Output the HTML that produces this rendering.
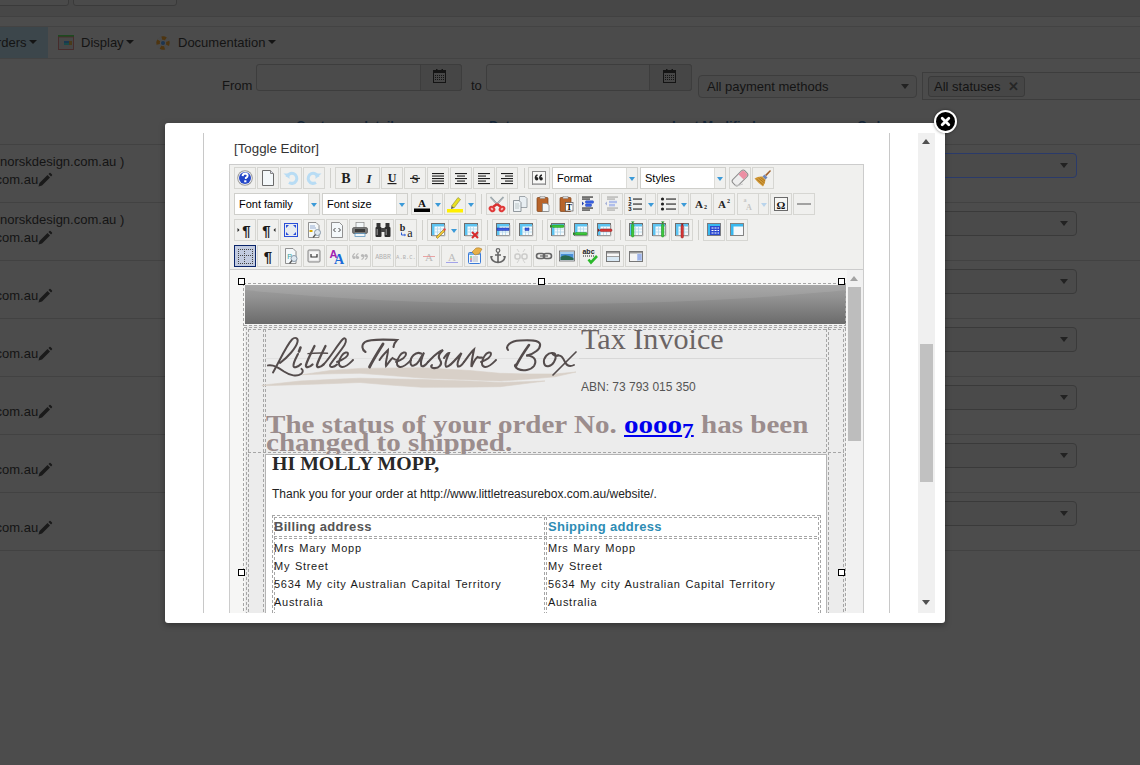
<!DOCTYPE html><html><head><meta charset="utf-8"><style>
*{margin:0;padding:0;box-sizing:border-box}
html,body{width:1140px;height:765px;overflow:hidden;background:#4c4c4c;font-family:"Liberation Sans",sans-serif;position:relative}
.ab{position:absolute}
.btn{position:absolute;width:22px;height:22px;border:1px solid #d6d6d2;background:#f0f0ee}
.btn svg{position:absolute;left:0;top:0;width:20px;height:20px}
.sep{position:absolute;width:1px;height:20px;background:#d0d0cc}
.sel{position:absolute;height:22px;background:#fff;border:1px solid #cfcfcb;font-size:11px;color:#000;padding-left:4px;line-height:20px;font-family:"Liberation Sans",sans-serif}
.sel .arr{position:absolute;right:0;top:0;width:11px;height:20px;background:#f0f0ee;border-left:1px solid #dcdcd8}
.sel .arr:after{content:"";position:absolute;left:2px;top:9px;border-left:3.5px solid transparent;border-right:3.5px solid transparent;border-top:4px solid #3b9ad8}
.dash{position:absolute;border:0 dashed #b4b4b4}
</style></head><body>
<div class="ab" style="left:0;top:0;width:1140px;height:17px;background:#474747"></div>
<div class="ab" style="left:-10px;top:-6px;width:79px;height:12px;border:1px solid #3a3a3a;border-radius:3px;background:#4a4a4a"></div>
<div class="ab" style="left:73px;top:-6px;width:104px;height:12px;border:1px solid #3a3a3a;border-radius:3px;background:#4a4a4a"></div>
<div class="ab" style="left:0;top:16px;width:1140px;height:1px;background:#414141"></div>
<div class="ab" style="left:0;top:26px;width:1140px;height:1px;background:#434343"></div>
<div class="ab" style="left:0;top:27px;width:1140px;height:31px;background:#4b4b4b"></div>
<div class="ab" style="left:0;top:58px;width:1140px;height:1px;background:#434343"></div>
<div class="ab" style="left:0;top:27px;width:48px;height:31px;background:#3c464b"></div>
<div class="ab" style="left:-3px;top:34.7px;font-size:13px;color:#141414">rders <span style="display:inline-block;width:0;height:0;border-top:4px solid #141414;border-left:4px solid transparent;border-right:4px solid transparent;vertical-align:middle;margin-left:-1px;position:relative;top:-1px"></span></div>
<svg class="ab" style="left:58px;top:35px" width="16" height="15"><rect x="0.5" y="1.5" width="15" height="13" fill="#474747" stroke="#3a3a3a"/><rect x="0" y="0" width="16" height="2" fill="#1e4a20"/><rect x="0.5" y="2" width="15" height="12.5" fill="none" stroke="#4a2a2a" stroke-width=".8"/><rect x="6" y="6" width="5" height="2" fill="#1a3850"/><rect x="6" y="8" width="5" height="2" fill="#1a4a4a"/><rect x="11" y="6" width="3" height="4" fill="#4a3a1a"/></svg>
<div class="ab" style="left:81px;top:34.7px;font-size:13px;color:#141414">Display <span style="display:inline-block;width:0;height:0;border-top:4px solid #141414;border-left:4px solid transparent;border-right:4px solid transparent;vertical-align:middle;margin-left:-1px;position:relative;top:-1px"></span></div>
<svg class="ab" style="left:155px;top:35px" width="16" height="16"><circle cx="8" cy="8" r="5" fill="none" stroke="#4a4a4a" stroke-width="3.5"/><circle cx="8" cy="8" r="5" fill="none" stroke="#4e3510" stroke-width="3.5" stroke-dasharray="4 3.85" transform="rotate(-20 8 8)"/><circle cx="8" cy="8" r="2" fill="#1d3550"/></svg>
<div class="ab" style="left:178px;top:34.7px;font-size:13px;color:#141414">Documentation <span style="display:inline-block;width:0;height:0;border-top:4px solid #141414;border-left:4px solid transparent;border-right:4px solid transparent;vertical-align:middle;margin-left:-1px;position:relative;top:-1px"></span></div>
<div class="ab" style="left:222px;top:78.2px;font-size:13px;color:#141414">From</div>
<div class="ab" style="left:256px;top:64px;width:206px;height:27px;border:1px solid #3d3d3d;border-radius:3px;background:#4b4b4b"></div>
<div class="ab" style="left:420px;top:64px;width:42px;height:27px;border:1px solid #3d3d3d;border-radius:0 3px 3px 0;background:#464646"></div>
<svg class="ab" style="left:433px;top:69px" width="13" height="14"><rect x="0.5" y="1.5" width="12" height="12" fill="none" stroke="#141414"/><rect x="0" y="1" width="13" height="3" fill="#141414"/><rect x="3" y="0" width="1.5" height="2" fill="#141414"/><rect x="8.5" y="0" width="1.5" height="2" fill="#141414"/><path d="M2 6.5 H11 M2 8.5 H11 M2 10.5 H11" stroke="#141414" stroke-width="1" stroke-dasharray="1 1"/></svg>
<div class="ab" style="left:471px;top:78.2px;font-size:13px;color:#141414">to</div>
<div class="ab" style="left:486px;top:64px;width:206px;height:27px;border:1px solid #3d3d3d;border-radius:3px;background:#4b4b4b"></div>
<div class="ab" style="left:649px;top:64px;width:43px;height:27px;border:1px solid #3d3d3d;border-radius:0 3px 3px 0;background:#464646"></div>
<svg class="ab" style="left:663px;top:69px" width="13" height="14"><rect x="0.5" y="1.5" width="12" height="12" fill="none" stroke="#141414"/><rect x="0" y="1" width="13" height="3" fill="#141414"/><rect x="3" y="0" width="1.5" height="2" fill="#141414"/><rect x="8.5" y="0" width="1.5" height="2" fill="#141414"/><path d="M2 6.5 H11 M2 8.5 H11 M2 10.5 H11" stroke="#141414" stroke-width="1" stroke-dasharray="1 1"/></svg>
<div class="ab" style="left:698px;top:75px;width:219px;height:23px;border:1px solid #3d3d3d;border-radius:4px;background:#4a4a4a"></div>
<div class="ab" style="left:707px;top:78.7px;font-size:13px;color:#141414">All payment methods</div>
<div class="ab" style="left:901px;top:84px;border-left:4px solid transparent;border-right:4px solid transparent;border-top:5px solid #222"></div>
<div class="ab" style="left:922px;top:72px;width:230px;height:28px;border:1px solid #3d3d3d;background:#4b4b4b"></div>
<div class="ab" style="left:928px;top:76px;width:97px;height:21px;border:1px solid #3a3a3a;border-radius:3px;background:#464646"></div>
<div class="ab" style="left:934px;top:78.6px;font-size:13px;color:#141414">All statuses<b style="color:#262626;font-size:13px;margin-left:8px">&#10005;</b></div>
<div class="ab" style="left:296px;top:117.5px;font-size:13px;font-weight:bold;color:#17283a;white-space:nowrap">Customer</div>
<div class="ab" style="left:360px;top:117.5px;font-size:13px;font-weight:bold;color:#17283a;white-space:nowrap">details</div>
<div class="ab" style="left:489px;top:117.5px;font-size:13px;font-weight:bold;color:#17283a;white-space:nowrap">Date</div>
<div class="ab" style="left:672px;top:117.5px;font-size:13px;font-weight:bold;color:#17283a;white-space:nowrap">Last Modified</div>
<div class="ab" style="left:857px;top:117.5px;font-size:13px;font-weight:bold;color:#17283a;white-space:nowrap">Order</div>
<div class="ab" style="left:0;top:144px;width:1140px;height:1px;background:#424242"></div>
<div class="ab" style="left:0;top:202px;width:1140px;height:1px;background:#424242"></div>
<div class="ab" style="left:0;top:260px;width:1140px;height:1px;background:#424242"></div>
<div class="ab" style="left:0;top:318px;width:1140px;height:1px;background:#424242"></div>
<div class="ab" style="left:0;top:376px;width:1140px;height:1px;background:#424242"></div>
<div class="ab" style="left:0;top:434px;width:1140px;height:1px;background:#424242"></div>
<div class="ab" style="left:0;top:492px;width:1140px;height:1px;background:#424242"></div>
<div class="ab" style="left:0;top:550px;width:1140px;height:1px;background:#424242"></div>
<div class="ab" style="left:0;top:154.2px;font-size:13px;color:#141414;white-space:nowrap">norskdesign.com.au )</div>
<div class="ab" style="left:-4.5px;top:171.8px;font-size:13px;color:#141414">com.au</div>
<div class="ab" style="left:37px;top:172px;width:16px;height:16px"><svg width="16" height="16"><path d="M1.5 14.5 L2.5 11 L10.5 3 L13 5.5 L5 13.5 Z M11.5 2 L12.5 1 Q13 .6 13.5 1 L15 2.5 Q15.4 3 15 3.5 L14 4.5Z" fill="#1a1a1a"/></svg></div>
<div class="ab" style="left:930px;top:153px;width:147px;height:25px;border:1px solid #2a3a6a;border-radius:4px;background:#4a4a4a"></div>
<div class="ab" style="left:1060px;top:163px;border-left:4px solid transparent;border-right:4px solid transparent;border-top:5px solid #222"></div>
<div class="ab" style="left:0;top:212.2px;font-size:13px;color:#141414;white-space:nowrap">norskdesign.com.au )</div>
<div class="ab" style="left:-4.5px;top:229.8px;font-size:13px;color:#141414">com.au</div>
<div class="ab" style="left:37px;top:230px;width:16px;height:16px"><svg width="16" height="16"><path d="M1.5 14.5 L2.5 11 L10.5 3 L13 5.5 L5 13.5 Z M11.5 2 L12.5 1 Q13 .6 13.5 1 L15 2.5 Q15.4 3 15 3.5 L14 4.5Z" fill="#1a1a1a"/></svg></div>
<div class="ab" style="left:930px;top:211px;width:147px;height:25px;border:1px solid #3a3a3a;border-radius:4px;background:#4a4a4a"></div>
<div class="ab" style="left:1060px;top:221px;border-left:4px solid transparent;border-right:4px solid transparent;border-top:5px solid #222"></div>
<div class="ab" style="left:-4.5px;top:287.8px;font-size:13px;color:#141414">com.au</div>
<div class="ab" style="left:37px;top:288px;width:16px;height:16px"><svg width="16" height="16"><path d="M1.5 14.5 L2.5 11 L10.5 3 L13 5.5 L5 13.5 Z M11.5 2 L12.5 1 Q13 .6 13.5 1 L15 2.5 Q15.4 3 15 3.5 L14 4.5Z" fill="#1a1a1a"/></svg></div>
<div class="ab" style="left:930px;top:269px;width:147px;height:25px;border:1px solid #3a3a3a;border-radius:4px;background:#4a4a4a"></div>
<div class="ab" style="left:1060px;top:279px;border-left:4px solid transparent;border-right:4px solid transparent;border-top:5px solid #222"></div>
<div class="ab" style="left:-4.5px;top:345.8px;font-size:13px;color:#141414">com.au</div>
<div class="ab" style="left:37px;top:346px;width:16px;height:16px"><svg width="16" height="16"><path d="M1.5 14.5 L2.5 11 L10.5 3 L13 5.5 L5 13.5 Z M11.5 2 L12.5 1 Q13 .6 13.5 1 L15 2.5 Q15.4 3 15 3.5 L14 4.5Z" fill="#1a1a1a"/></svg></div>
<div class="ab" style="left:930px;top:327px;width:147px;height:25px;border:1px solid #3a3a3a;border-radius:4px;background:#4a4a4a"></div>
<div class="ab" style="left:1060px;top:337px;border-left:4px solid transparent;border-right:4px solid transparent;border-top:5px solid #222"></div>
<div class="ab" style="left:-4.5px;top:403.8px;font-size:13px;color:#141414">com.au</div>
<div class="ab" style="left:37px;top:404px;width:16px;height:16px"><svg width="16" height="16"><path d="M1.5 14.5 L2.5 11 L10.5 3 L13 5.5 L5 13.5 Z M11.5 2 L12.5 1 Q13 .6 13.5 1 L15 2.5 Q15.4 3 15 3.5 L14 4.5Z" fill="#1a1a1a"/></svg></div>
<div class="ab" style="left:930px;top:385px;width:147px;height:25px;border:1px solid #3a3a3a;border-radius:4px;background:#4a4a4a"></div>
<div class="ab" style="left:1060px;top:395px;border-left:4px solid transparent;border-right:4px solid transparent;border-top:5px solid #222"></div>
<div class="ab" style="left:-4.5px;top:461.8px;font-size:13px;color:#141414">com.au</div>
<div class="ab" style="left:37px;top:462px;width:16px;height:16px"><svg width="16" height="16"><path d="M1.5 14.5 L2.5 11 L10.5 3 L13 5.5 L5 13.5 Z M11.5 2 L12.5 1 Q13 .6 13.5 1 L15 2.5 Q15.4 3 15 3.5 L14 4.5Z" fill="#1a1a1a"/></svg></div>
<div class="ab" style="left:930px;top:443px;width:147px;height:25px;border:1px solid #3a3a3a;border-radius:4px;background:#4a4a4a"></div>
<div class="ab" style="left:1060px;top:453px;border-left:4px solid transparent;border-right:4px solid transparent;border-top:5px solid #222"></div>
<div class="ab" style="left:-4.5px;top:519.8px;font-size:13px;color:#141414">com.au</div>
<div class="ab" style="left:37px;top:520px;width:16px;height:16px"><svg width="16" height="16"><path d="M1.5 14.5 L2.5 11 L10.5 3 L13 5.5 L5 13.5 Z M11.5 2 L12.5 1 Q13 .6 13.5 1 L15 2.5 Q15.4 3 15 3.5 L14 4.5Z" fill="#1a1a1a"/></svg></div>
<div class="ab" style="left:930px;top:501px;width:147px;height:25px;border:1px solid #3a3a3a;border-radius:4px;background:#4a4a4a"></div>
<div class="ab" style="left:1060px;top:511px;border-left:4px solid transparent;border-right:4px solid transparent;border-top:5px solid #222"></div>
<div class="ab" style="left:165px;top:123px;width:780px;height:500px;background:#fff;border-radius:3px;box-shadow:0 2px 6px rgba(0,0,0,.35)"></div>
<div class="ab" style="left:203px;top:133px;width:1px;height:480px;background:#c8c8c8"></div>
<div class="ab" style="left:889px;top:133px;width:1px;height:480px;background:#c8c8c8"></div>
<div class="ab" style="left:918px;top:133px;width:17px;height:480px;background:#f0f0f0"></div>
<div class="ab" style="left:920px;top:344px;width:13px;height:138px;background:#c1c1c1"></div>
<div class="ab" style="left:922px;top:139px;border-left:4px solid transparent;border-right:4px solid transparent;border-bottom:5px solid #505050"></div>
<div class="ab" style="left:922px;top:600px;border-left:4px solid transparent;border-right:4px solid transparent;border-top:5px solid #505050"></div>
<div class="ab" style="left:934px;top:110px;width:23px;height:23px;border-radius:50%;background:#000;border:2px solid #fff;box-shadow:0 0 3px rgba(0,0,0,.5)"><svg class="ab" style="left:0;top:0" width="19" height="19"><path d="M6.2 6.2 L12.8 12.8 M12.8 6.2 L6.2 12.8" stroke="#fff" stroke-width="2.8" stroke-linecap="round"/></svg></div>
<div class="ab" style="left:234px;top:140.6px;font-size:13.3px;color:#333">[Toggle Editor]</div>
<div class="ab" style="left:229px;top:164px;width:635px;height:449px;border:1px solid #ccc;border-bottom:0;background:#f0f0ee"></div>
<div class="ab" style="left:230px;top:269px;width:633px;height:1px;background:#ccc"></div>
<div class="ab" style="left:230px;top:270px;width:633px;height:343px;background:#f6f6f5"></div>
<div class="btn" style="left:234px;top:167px;"><svg viewBox="0 0 20 20"><circle cx="10" cy="10" r="7.8" fill="#9a9a9a"/><circle cx="10" cy="10" r="6.8" fill="#fafafa"/><circle cx="10" cy="10" r="6" fill="#2346c8"/><path d="M7.6 8.2 Q7.8 5.6 10.2 5.6 Q12.7 5.7 12.6 7.8 Q12.5 9.2 10.9 9.9 L10.9 11" stroke="#fff" stroke-width="2" fill="none"/><rect x="9.2" y="12.3" width="2.2" height="2" fill="#fff"/></svg></div>
<div class="btn" style="left:257px;top:167px;"><svg viewBox="0 0 20 20"><path d="M4.5 2.5 H12.5 L15.5 5.5 V17.5 H4.5 Z" fill="#f4f8fa" stroke="#6a6a6a"/><path d="M12.5 2.5 V5.5 H15.5" fill="#dde" stroke="#888"/></svg></div>
<div class="btn" style="left:280px;top:167px;"><svg viewBox="0 0 20 20"><path d="M6 9 A5 5 0 1 1 8 14.5" stroke="#b8dcf4" stroke-width="3" fill="none"/><path d="M2.5 5.5 H8.5 V11 Z" fill="#b8dcf4"/></svg></div>
<div class="btn" style="left:303px;top:167px;"><svg viewBox="0 0 20 20"><path d="M14 9 A5 5 0 1 0 12 14.5" stroke="#b8dcf4" stroke-width="3" fill="none"/><path d="M17.5 5.5 H11.5 V11 Z" fill="#b8dcf4"/></svg></div>
<div class="sep" style="left:330px;top:168px"></div>
<div class="btn" style="left:335px;top:167px;"><svg viewBox="0 0 20 20"><text x="10" y="14.5" font-family="Liberation Serif" font-size="14" font-weight="bold" font-style="normal" fill="#222" text-anchor="middle" >B</text></svg></div>
<div class="btn" style="left:358px;top:167px;"><svg viewBox="0 0 20 20"><text x="10" y="14.5" font-family="Liberation Serif" font-size="13" font-weight="bold" font-style="italic" fill="#222" text-anchor="middle" >I</text></svg></div>
<div class="btn" style="left:381px;top:167px;"><svg viewBox="0 0 20 20"><text x="10" y="13.5" font-family="Liberation Serif" font-size="12" font-weight="bold" font-style="normal" fill="#222" text-anchor="middle" >U</text><rect x="5.5" y="15" width="9" height="1.2" fill="#222"/></svg></div>
<div class="btn" style="left:404px;top:167px;"><svg viewBox="0 0 20 20"><text x="10" y="14.5" font-family="Liberation Serif" font-size="12" font-weight="bold" font-style="normal" fill="#222" text-anchor="middle" >S</text><rect x="5" y="9.8" width="10" height="1.2" fill="#222"/></svg></div>
<div class="btn" style="left:427px;top:167px;"><svg viewBox="0 0 20 20"><rect x="4" y="5" width="12" height="1.1" fill="#1e1e1e"/><rect x="4" y="7.5" width="12" height="1.1" fill="#1e1e1e"/><rect x="4" y="10" width="12" height="1.1" fill="#1e1e1e"/><rect x="4" y="12.5" width="12" height="1.1" fill="#1e1e1e"/><rect x="4" y="15" width="12" height="1.1" fill="#1e1e1e"/></svg></div>
<div class="btn" style="left:450px;top:167px;"><svg viewBox="0 0 20 20"><rect x="4" y="5" width="12" height="1.1" fill="#1e1e1e"/><rect x="6" y="7.5" width="8" height="1.1" fill="#1e1e1e"/><rect x="4" y="10" width="12" height="1.1" fill="#1e1e1e"/><rect x="6" y="12.5" width="8" height="1.1" fill="#1e1e1e"/><rect x="4" y="15" width="12" height="1.1" fill="#1e1e1e"/></svg></div>
<div class="btn" style="left:473px;top:167px;"><svg viewBox="0 0 20 20"><rect x="4" y="5" width="12" height="1.1" fill="#1e1e1e"/><rect x="4" y="7.5" width="8" height="1.1" fill="#1e1e1e"/><rect x="4" y="10" width="12" height="1.1" fill="#1e1e1e"/><rect x="4" y="12.5" width="8" height="1.1" fill="#1e1e1e"/><rect x="4" y="15" width="12" height="1.1" fill="#1e1e1e"/></svg></div>
<div class="btn" style="left:496px;top:167px;"><svg viewBox="0 0 20 20"><rect x="4" y="5" width="12" height="1.1" fill="#1e1e1e"/><rect x="8" y="7.5" width="8" height="1.1" fill="#1e1e1e"/><rect x="4" y="10" width="12" height="1.1" fill="#1e1e1e"/><rect x="8" y="12.5" width="8" height="1.1" fill="#1e1e1e"/><rect x="4" y="15" width="12" height="1.1" fill="#1e1e1e"/></svg></div>
<div class="sep" style="left:524px;top:168px"></div>
<div class="btn" style="left:528px;top:167px;"><svg viewBox="0 0 20 20"><rect x="3.5" y="3.5" width="13" height="13" fill="#f8f8f6" stroke="#888"/><rect x="4" y="15" width="12" height="1.5" fill="#bbb"/><g fill="#222"><circle cx="7.7" cy="10.8" r="1.7"/><circle cx="12.1" cy="10.8" r="1.7"/></g><path d="M6.2 10.5 Q6.5 7.5 8.5 7 M10.6 10.5 Q10.9 7.5 12.9 7" stroke="#222" stroke-width="1.3" fill="none"/></svg></div>
<div class="sel" style="left:552px;top:167px;width:86px">Format<div class="arr"></div></div>
<div class="sel" style="left:640px;top:167px;width:86px">Styles<div class="arr"></div></div>
<div class="btn" style="left:729px;top:167px;"><svg viewBox="0 0 20 20"><g transform="rotate(-45 10 10)"><rect x="1.5" y="6" width="17" height="8" rx="2.5" fill="#eeeeee" stroke="#8c8c8c" stroke-width="1"/><path d="M11.5 6.5 H16 Q18 6.5 18 9 V11 Q18 13.5 16 13.5 H11.5Z" fill="#ec8fa4"/></g><path d="M5 17 Q9 18 13 16" stroke="#ccc" stroke-width="1" fill="none"/></svg></div>
<div class="btn" style="left:752px;top:167px;"><svg viewBox="0 0 20 20"><path d="M1.5 10.5 Q5 8 9.5 8.5 L12.5 11.5 Q12.5 15 10 18.5 Q5 15 1.5 10.5Z" fill="#d49a38"/><path d="M3.5 11 L10.5 17 M5.5 10 L11.5 15 M7.5 9.5 L12 13" stroke="#9a6a1a" stroke-width=".7"/><path d="M9.5 8.5 L12.5 11.5 L14.5 9.5 L11.5 6.5Z" fill="#6e86b8"/><path d="M12 7 L16.5 2.5 Q17.5 2 18 3 L13.5 8Z" fill="#a0602a"/></svg></div>
<div class="sel" style="left:234px;top:193px;width:86px">Font family<div class="arr"></div></div>
<div class="sel" style="left:322px;top:193px;width:86px">Font size<div class="arr"></div></div>
<div class="btn" style="left:411px;top:193px;width:32px"><svg viewBox="0 0 20 20"><text x="10" y="12.5" font-family="Liberation Serif" font-size="11" font-weight="bold" font-style="normal" fill="#111" text-anchor="middle" >A</text><rect x="2" y="14.5" width="16" height="3.5" fill="#000"/></svg><div class="ab" style="left:20px;top:0;width:1px;height:20px;background:#d6d6d2"></div><div class="ab" style="left:23px;top:9px;border-left:3.5px solid transparent;border-right:3.5px solid transparent;border-top:4px solid #3b9ad8"></div></div>
<div class="btn" style="left:444px;top:193px;width:32px"><svg viewBox="0 0 20 20"><path d="M6.5 12 L13 3.5 L15.5 5.5 L9 14 Z" fill="#e8e020" stroke="#8a8a40" stroke-width=".6"/><path d="M6.5 12 L9 14 L6 15Z" fill="#555"/><rect x="2" y="15" width="16" height="3.5" fill="#ffef00"/></svg><div class="ab" style="left:20px;top:0;width:1px;height:20px;background:#d6d6d2"></div><div class="ab" style="left:23px;top:9px;border-left:3.5px solid transparent;border-right:3.5px solid transparent;border-top:4px solid #3b9ad8"></div></div>
<div class="sep" style="left:481px;top:194px"></div>
<div class="btn" style="left:486px;top:193px;"><svg viewBox="0 0 20 20"><path d="M3.5 3 L10 10 M16.5 3 L10 10" stroke="#7e8a90" stroke-width="1.8"/><path d="M3.5 3 L10 10 M16.5 3 L10 10" stroke="#e8eef0" stroke-width=".6"/><path d="M10 10 L6 13" stroke="#d83030" stroke-width="2.5"/><path d="M10 10 L14 13" stroke="#d83030" stroke-width="2.5"/><ellipse cx="5" cy="15" rx="3.6" ry="2.8" fill="#e03a3a" transform="rotate(40 5 15)"/><ellipse cx="15" cy="15" rx="3.6" ry="2.8" fill="#e03a3a" transform="rotate(-40 15 15)"/><ellipse cx="5" cy="15" rx="1.4" ry="1" fill="#f6b8b8" transform="rotate(40 5 15)"/><ellipse cx="15" cy="15" rx="1.4" ry="1" fill="#f6b8b8" transform="rotate(-40 15 15)"/></svg></div>
<div class="btn" style="left:509px;top:193px;"><svg viewBox="0 0 20 20"><path d="M9.5 2.5 H15 L17 4.5 V13.5 H9.5Z" fill="#e8eef2" stroke="#8a9298" stroke-width=".8"/><path d="M3.5 6.5 H9 L11 8.5 V17.5 H3.5Z" fill="#eef3f6" stroke="#7a8288" stroke-width=".8"/><path d="M5 10 H9 M5 12 H9.5 M5 14 H9" stroke="#9aa" stroke-width=".6"/></svg></div>
<div class="btn" style="left:532px;top:193px;"><svg viewBox="0 0 20 20"><rect x="4" y="3.5" width="11" height="14" rx="1" fill="#b8642a" stroke="#7a4018" stroke-width=".7"/><rect x="7" y="2.5" width="5" height="2" fill="#ddd" stroke="#888" stroke-width=".5"/><path d="M9.5 9.5 H14 L16 11.5 V17.5 H9.5Z" fill="#f2f6f8" stroke="#7a8288" stroke-width=".7"/></svg></div>
<div class="btn" style="left:555px;top:193px;"><svg viewBox="0 0 20 20"><rect x="4" y="3.5" width="11" height="14" rx="1" fill="#b8642a" stroke="#7a4018" stroke-width=".7"/><rect x="7" y="2.5" width="5" height="2" fill="#ddd" stroke="#888" stroke-width=".5"/><rect x="9.5" y="8.5" width="7.5" height="8.5" fill="#fff" stroke="#555" stroke-width=".7"/><text x="13.2" y="15.5" font-family="Liberation Serif" font-size="8" font-weight="bold" font-style="normal" fill="#000" text-anchor="middle" >T</text></svg></div>
<div class="btn" style="left:578px;top:193px;"><svg viewBox="0 0 20 20"><rect x="3" y="2.5" width="11" height="1.1" fill="#1e1e1e"/><rect x="3" y="4.5" width="8" height="1.1" fill="#1e1e1e"/><rect x="3" y="13.5" width="11" height="1.1" fill="#1e1e1e"/><rect x="3" y="15.5" width="8" height="1.1" fill="#1e1e1e"/><rect x="6.5" y="6.8" width="8" height="2.4" rx=".6" fill="#3a64e8" stroke="#2040b0" stroke-width=".5"/><rect x="6.5" y="10" width="6" height="2.4" rx=".6" fill="#3a64e8" stroke="#2040b0" stroke-width=".5"/><path d="M3 7.5 L5 9.5 L3 11.5Z" fill="#2040b0"/></svg></div>
<div class="btn" style="left:601px;top:193px;"><svg viewBox="0 0 20 20"><g opacity=".35"><rect x="5" y="2.5" width="11" height="1.1" fill="#1e1e1e"/><rect x="5" y="4.5" width="8" height="1.1" fill="#1e1e1e"/><rect x="5" y="13.5" width="11" height="1.1" fill="#1e1e1e"/><rect x="5" y="15.5" width="8" height="1.1" fill="#1e1e1e"/><rect x="7" y="6.8" width="8" height="2.4" fill="#3a64e8"/><rect x="7" y="10" width="6" height="2.4" fill="#3a64e8"/><path d="M5 7.5 L3 9.5 L5 11.5Z" fill="#2040b0"/></g></svg></div>
<div class="btn" style="left:624px;top:193px;width:32px"><svg viewBox="0 0 20 20"><text x="5" y="7" font-family="Liberation Sans" font-size="6" font-weight="bold" font-style="normal" fill="#111" text-anchor="middle" >1</text><text x="5" y="12" font-family="Liberation Sans" font-size="6" font-weight="bold" font-style="normal" fill="#111" text-anchor="middle" >2</text><text x="5" y="17" font-family="Liberation Sans" font-size="6" font-weight="bold" font-style="normal" fill="#111" text-anchor="middle" >3</text><rect x="8" y="4.5" width="9" height="1.1" fill="#1e1e1e"/><rect x="8" y="9.5" width="9" height="1.1" fill="#1e1e1e"/><rect x="8" y="14.5" width="9" height="1.1" fill="#1e1e1e"/></svg><div class="ab" style="left:20px;top:0;width:1px;height:20px;background:#d6d6d2"></div><div class="ab" style="left:23px;top:9px;border-left:3.5px solid transparent;border-right:3.5px solid transparent;border-top:4px solid #3b9ad8"></div></div>
<div class="btn" style="left:657px;top:193px;width:32px"><svg viewBox="0 0 20 20"><circle cx="4.5" cy="5" r="1.6" fill="#222"/><circle cx="4.5" cy="10" r="1.6" fill="#222"/><circle cx="4.5" cy="15" r="1.6" fill="#222"/><rect x="8" y="4.5" width="10" height="1.1" fill="#1e1e1e"/><rect x="8" y="9.5" width="10" height="1.1" fill="#1e1e1e"/><rect x="8" y="14.5" width="10" height="1.1" fill="#1e1e1e"/></svg><div class="ab" style="left:20px;top:0;width:1px;height:20px;background:#d6d6d2"></div><div class="ab" style="left:23px;top:9px;border-left:3.5px solid transparent;border-right:3.5px solid transparent;border-top:4px solid #3b9ad8"></div></div>
<div class="btn" style="left:690px;top:193px;"><svg viewBox="0 0 20 20"><text x="8" y="14" font-family="Liberation Serif" font-size="11" font-weight="bold" font-style="normal" fill="#222" text-anchor="middle" >A</text><text x="14.5" y="15" font-family="Liberation Serif" font-size="6" font-weight="bold" font-style="normal" fill="#222" text-anchor="middle" >2</text></svg></div>
<div class="btn" style="left:713px;top:193px;"><svg viewBox="0 0 20 20"><text x="8" y="14" font-family="Liberation Serif" font-size="11" font-weight="bold" font-style="normal" fill="#222" text-anchor="middle" >A</text><text x="14.5" y="9" font-family="Liberation Serif" font-size="6" font-weight="bold" font-style="normal" fill="#222" text-anchor="middle" >2</text></svg></div>
<div class="btn" style="left:737px;top:193px;width:32px"><svg viewBox="0 0 20 20"><g opacity=".25"><text x="7" y="8" font-family="Liberation Serif" font-size="6" font-weight="bold" font-style="normal" fill="#444" text-anchor="middle" >a</text><text x="11" y="16" font-family="Liberation Serif" font-size="8" font-weight="bold" font-style="normal" fill="#444" text-anchor="middle" >A</text></g></svg><div class="ab" style="left:20px;top:0;width:1px;height:20px;background:#d6d6d2"></div><div class="ab" style="left:23px;top:9px;border-left:3.5px solid transparent;border-right:3.5px solid transparent;border-top:4px solid #b9d4ec"></div></div>
<div class="btn" style="left:770px;top:193px;"><svg viewBox="0 0 20 20"><rect x="3.5" y="3.5" width="13" height="13" fill="#f6f6f4" stroke="#6a6a6a"/><text x="10" y="14.5" font-family="Liberation Serif" font-size="11" font-weight="bold" font-style="normal" fill="#111" text-anchor="middle" >&#937;</text></svg></div>
<div class="btn" style="left:793px;top:193px;"><svg viewBox="0 0 20 20"><rect x="3" y="9.5" width="14" height="1" fill="#555"/></svg></div>
<div class="btn" style="left:234px;top:219px;"><svg viewBox="0 0 20 20"><path d="M2.5 8 L4.5 10 L2.5 12Z" fill="#222"/><text x="11.5" y="16" font-family="Liberation Sans" font-size="15" font-weight="bold" font-style="normal" fill="#1a1a1a" text-anchor="middle" >&#182;</text></svg></div>
<div class="btn" style="left:257px;top:219px;"><svg viewBox="0 0 20 20"><text x="8.5" y="16" font-family="Liberation Sans" font-size="15" font-weight="bold" font-style="normal" fill="#1a1a1a" text-anchor="middle" >&#182;</text><path d="M17.5 8 L15.5 10 L17.5 12Z" fill="#222"/></svg></div>
<div class="btn" style="left:280px;top:219px;"><svg viewBox="0 0 20 20"><rect x="3.5" y="3.5" width="13" height="13" fill="#e8ecf0" stroke="#2a4ed8" stroke-width="1"/><path d="M5 5 H8 L5 8Z M15 5 H12 L15 8Z M5 15 H8 L5 12Z M15 15 H12 L15 12Z" fill="#2a4ed8"/></svg></div>
<div class="btn" style="left:303px;top:219px;"><svg viewBox="0 0 20 20"><path d="M4.5 2.5 H12 L15 5.5 V17.5 H4.5Z" fill="#f4f8fa" stroke="#777" stroke-width=".8"/><rect x="5.5" y="10" width="3" height="2" fill="#d8a800"/><path d="M6 6 H11 M6 8 H12" stroke="#7090c0" stroke-width=".7"/><circle cx="13.5" cy="12.5" r="3" fill="#dfe8f0" stroke="#8899aa"/><path d="M11.5 14.5 L9 17.5" stroke="#555" stroke-width="1.2"/></svg></div>
<div class="btn" style="left:326px;top:219px;"><svg viewBox="0 0 20 20"><path d="M4.5 2.5 H12.5 L15.5 5.5 V17.5 H4.5Z" fill="#f4f8fa" stroke="#777" stroke-width=".8"/><path d="M8.5 8 L6.5 10 L8.5 12 M11.5 8 L13.5 10 L11.5 12" stroke="#444" stroke-width="1" fill="none"/></svg></div>
<div class="btn" style="left:349px;top:219px;"><svg viewBox="0 0 20 20"><rect x="6" y="2.5" width="8" height="6" fill="#f2f6f8" stroke="#888" stroke-width=".7"/><rect x="2.5" y="7.5" width="15" height="6" rx="1.5" fill="#777" stroke="#555" stroke-width=".7"/><rect x="5" y="9" width="10" height="3" fill="#3a3a3a"/><rect x="5" y="13.5" width="10" height="3" fill="#f2f6f8" stroke="#4a8ab8" stroke-width=".7"/></svg></div>
<div class="btn" style="left:372px;top:219px;"><svg viewBox="0 0 20 20"><rect x="3.5" y="3" width="4" height="5" fill="#333"/><rect x="12.5" y="3" width="4" height="5" fill="#333"/><rect x="2.5" y="7" width="6" height="10" rx="1" fill="#2c2c2c"/><rect x="11.5" y="7" width="6" height="10" rx="1" fill="#2c2c2c"/><rect x="8" y="8" width="4" height="4" fill="#444"/><rect x="3.5" y="9" width="1.5" height="6" fill="#777"/><rect x="12.5" y="9" width="1.5" height="6" fill="#777"/></svg></div>
<div class="btn" style="left:395px;top:219px;"><svg viewBox="0 0 20 20"><text x="6.5" y="11" font-family="Liberation Serif" font-size="10" font-weight="bold" font-style="normal" fill="#222" text-anchor="middle" >b</text><text x="14" y="16.5" font-family="Liberation Serif" font-size="12" font-weight="normal" font-style="normal" fill="#222" text-anchor="middle" >a</text><path d="M5.5 12.5 L5.5 15 L9 15" stroke="#2a5ad8" stroke-width="1" fill="none"/><path d="M8.5 13.5 L10 15 L8.5 16.5Z" fill="#2a5ad8"/></svg></div>
<div class="sep" style="left:422px;top:220px"></div>
<div class="btn" style="left:427px;top:219px;width:32px"><svg viewBox="0 0 20 20"><rect x="3.5" y="3.5" width="13" height="12" fill="#f6fafc" stroke="#6e6e6e" stroke-width="1"/><rect x="4" y="4" width="12" height="2.5" fill="#5cc4f2"/><rect x="4" y="4" width="2.5" height="11" fill="#5cc4f2"/><path d="M6.5 9 H16 M6.5 12 H16 M9.5 6.5 V15 M12.5 6.5 V15" stroke="#b4d8ec" stroke-width=".8"/><path d="M4 16 H17 V5" stroke="#c8c8c8" stroke-width="1" fill="none"/><path d="M8 17 L15.5 9.5 L17 11 L9.5 18.5Z" fill="#f0c838" stroke="#806010" stroke-width=".5"/><circle cx="16.5" cy="9.5" r="1.2" fill="#e04848"/></svg><div class="ab" style="left:20px;top:0;width:1px;height:20px;background:#d6d6d2"></div><div class="ab" style="left:23px;top:9px;border-left:3.5px solid transparent;border-right:3.5px solid transparent;border-top:4px solid #3b9ad8"></div></div>
<div class="btn" style="left:460px;top:219px;"><svg viewBox="0 0 20 20"><rect x="3.5" y="3.5" width="13" height="12" fill="#f6fafc" stroke="#6e6e6e" stroke-width="1"/><rect x="4" y="4" width="12" height="2.5" fill="#5cc4f2"/><rect x="4" y="4" width="2.5" height="11" fill="#5cc4f2"/><path d="M6.5 9 H16 M6.5 12 H16 M9.5 6.5 V15 M12.5 6.5 V15" stroke="#b4d8ec" stroke-width=".8"/><path d="M4 16 H17 V5" stroke="#c8c8c8" stroke-width="1" fill="none"/><path d="M11 12 L17 18 M17 12 L11 18" stroke="#d8282a" stroke-width="2"/></svg></div>
<div class="sep" style="left:487px;top:220px"></div>
<div class="btn" style="left:492px;top:219px;"><svg viewBox="0 0 20 20"><rect x="3.5" y="3.5" width="13" height="12" fill="#f6fafc" stroke="#6e6e6e" stroke-width="1"/><rect x="4" y="4" width="12" height="2.5" fill="#5cc4f2"/><rect x="4" y="4" width="2.5" height="11" fill="#5cc4f2"/><path d="M6.5 9 H16 M6.5 12 H16 M9.5 6.5 V15 M12.5 6.5 V15" stroke="#b4d8ec" stroke-width=".8"/><path d="M4 16 H17 V5" stroke="#c8c8c8" stroke-width="1" fill="none"/><rect x="4" y="8" width="12" height="2.5" fill="#3a5ae0" stroke="#1a30a0" stroke-width=".5"/></svg></div>
<div class="btn" style="left:515px;top:219px;"><svg viewBox="0 0 20 20"><rect x="3.5" y="3.5" width="13" height="12" fill="#f6fafc" stroke="#6e6e6e" stroke-width="1"/><rect x="4" y="4" width="12" height="2.5" fill="#5cc4f2"/><rect x="4" y="4" width="2.5" height="11" fill="#5cc4f2"/><path d="M6.5 9 H16 M6.5 12 H16 M9.5 6.5 V15 M12.5 6.5 V15" stroke="#b4d8ec" stroke-width=".8"/><path d="M4 16 H17 V5" stroke="#c8c8c8" stroke-width="1" fill="none"/><rect x="9" y="8" width="4" height="2.5" fill="#3a5ae0" stroke="#1a30a0" stroke-width=".5"/></svg></div>
<div class="sep" style="left:542px;top:220px"></div>
<div class="btn" style="left:547px;top:219px;"><svg viewBox="0 0 20 20"><rect x="3.5" y="3.5" width="13" height="12" fill="#f6fafc" stroke="#6e6e6e" stroke-width="1"/><rect x="4" y="4" width="12" height="2.5" fill="#5cc4f2"/><rect x="4" y="4" width="2.5" height="11" fill="#5cc4f2"/><path d="M6.5 9 H16 M6.5 12 H16 M9.5 6.5 V15 M12.5 6.5 V15" stroke="#b4d8ec" stroke-width=".8"/><path d="M4 16 H17 V5" stroke="#c8c8c8" stroke-width="1" fill="none"/><rect x="4" y="5" width="12" height="2.4" rx="1" fill="#3cc83c" stroke="#1a8a1a" stroke-width=".5"/><path d="M2 4.5 L4 6.2 L2 8Z" fill="#1a8a1a"/></svg></div>
<div class="btn" style="left:570px;top:219px;"><svg viewBox="0 0 20 20"><rect x="3.5" y="3.5" width="13" height="12" fill="#f6fafc" stroke="#6e6e6e" stroke-width="1"/><rect x="4" y="4" width="12" height="2.5" fill="#5cc4f2"/><rect x="4" y="4" width="2.5" height="11" fill="#5cc4f2"/><path d="M6.5 9 H16 M6.5 12 H16 M9.5 6.5 V15 M12.5 6.5 V15" stroke="#b4d8ec" stroke-width=".8"/><path d="M4 16 H17 V5" stroke="#c8c8c8" stroke-width="1" fill="none"/><rect x="4" y="12.5" width="12" height="2.4" rx="1" fill="#3cc83c" stroke="#1a8a1a" stroke-width=".5"/><path d="M2 12 L4 13.7 L2 15.5Z" fill="#1a8a1a"/></svg></div>
<div class="btn" style="left:593px;top:219px;"><svg viewBox="0 0 20 20"><rect x="3.5" y="3.5" width="13" height="12" fill="#f6fafc" stroke="#6e6e6e" stroke-width="1"/><rect x="4" y="4" width="12" height="2.5" fill="#5cc4f2"/><rect x="4" y="4" width="2.5" height="11" fill="#5cc4f2"/><path d="M6.5 9 H16 M6.5 12 H16 M9.5 6.5 V15 M12.5 6.5 V15" stroke="#b4d8ec" stroke-width=".8"/><path d="M4 16 H17 V5" stroke="#c8c8c8" stroke-width="1" fill="none"/><rect x="6" y="9" width="12" height="2.4" rx="1" fill="#d83838" stroke="#901818" stroke-width=".5"/><path d="M4 8.5 L6 10.2 L4 12Z" fill="#901818"/></svg></div>
<div class="sep" style="left:620px;top:220px"></div>
<div class="btn" style="left:625px;top:219px;"><svg viewBox="0 0 20 20"><rect x="3.5" y="3.5" width="13" height="12" fill="#f6fafc" stroke="#6e6e6e" stroke-width="1"/><rect x="4" y="4" width="12" height="2.5" fill="#5cc4f2"/><rect x="4" y="4" width="2.5" height="11" fill="#5cc4f2"/><path d="M6.5 9 H16 M6.5 12 H16 M9.5 6.5 V15 M12.5 6.5 V15" stroke="#b4d8ec" stroke-width=".8"/><path d="M4 16 H17 V5" stroke="#c8c8c8" stroke-width="1" fill="none"/><rect x="5.5" y="4" width="2.4" height="13" rx="1" fill="#3cc83c" stroke="#1a8a1a" stroke-width=".5"/><path d="M5 1.5 L6.7 3.5 L8.5 1.5Z" fill="#1a8a1a"/></svg></div>
<div class="btn" style="left:648px;top:219px;"><svg viewBox="0 0 20 20"><rect x="3.5" y="3.5" width="13" height="12" fill="#f6fafc" stroke="#6e6e6e" stroke-width="1"/><rect x="4" y="4" width="12" height="2.5" fill="#5cc4f2"/><rect x="4" y="4" width="2.5" height="11" fill="#5cc4f2"/><path d="M6.5 9 H16 M6.5 12 H16 M9.5 6.5 V15 M12.5 6.5 V15" stroke="#b4d8ec" stroke-width=".8"/><path d="M4 16 H17 V5" stroke="#c8c8c8" stroke-width="1" fill="none"/><rect x="12.5" y="4" width="2.4" height="13" rx="1" fill="#3cc83c" stroke="#1a8a1a" stroke-width=".5"/><path d="M12 1.5 L13.7 3.5 L15.5 1.5Z" fill="#1a8a1a"/></svg></div>
<div class="btn" style="left:671px;top:219px;"><svg viewBox="0 0 20 20"><rect x="3.5" y="3.5" width="13" height="12" fill="#f6fafc" stroke="#6e6e6e" stroke-width="1"/><rect x="4" y="4" width="12" height="2.5" fill="#5cc4f2"/><rect x="4" y="4" width="2.5" height="11" fill="#5cc4f2"/><path d="M6.5 9 H16 M6.5 12 H16 M9.5 6.5 V15 M12.5 6.5 V15" stroke="#b4d8ec" stroke-width=".8"/><path d="M4 16 H17 V5" stroke="#c8c8c8" stroke-width="1" fill="none"/><rect x="9" y="5" width="2.4" height="13" rx="1" fill="#d83838" stroke="#901818" stroke-width=".5"/><path d="M8.5 3.5 L10.2 5.5 L12 3.5Z" fill="#901818"/></svg></div>
<div class="sep" style="left:698px;top:220px"></div>
<div class="btn" style="left:703px;top:219px;"><svg viewBox="0 0 20 20"><rect x="3.5" y="3.5" width="13" height="12" fill="#2a48d0" stroke="#777" stroke-width=".9"/><rect x="4" y="4" width="12" height="2" fill="#38b8f0"/><rect x="4" y="4" width="2" height="11" fill="#38b8f0"/><path d="M7.5 8 H9.5 M10.5 8 H12.5 M13.5 8 H15 M7.5 10.5 H9.5 M10.5 10.5 H12.5 M13.5 10.5 H15 M7.5 13 H9.5 M10.5 13 H12.5 M13.5 13 H15" stroke="#fff" stroke-width="1"/></svg></div>
<div class="btn" style="left:726px;top:219px;"><svg viewBox="0 0 20 20"><rect x="3.5" y="3.5" width="13" height="12" fill="#f6f8fa" stroke="#777" stroke-width=".9"/><rect x="4" y="4" width="12" height="2.5" fill="#38b8f0"/><rect x="4" y="4" width="2.5" height="11" fill="#38b8f0"/></svg></div>
<div class="btn" style="left:234px;top:245px;border-color:#0a246a;background:#c2cbe0;"><svg viewBox="0 0 20 20"><rect x="3" y="3" width="1" height="1" fill="#444"/><rect x="3" y="5" width="1" height="1" fill="#444"/><rect x="3" y="7" width="1" height="1" fill="#444"/><rect x="3" y="9" width="1" height="1" fill="#444"/><rect x="3" y="11" width="1" height="1" fill="#444"/><rect x="3" y="13" width="1" height="1" fill="#444"/><rect x="3" y="15" width="1" height="1" fill="#444"/><rect x="3" y="17" width="1" height="1" fill="#444"/><rect x="5" y="3" width="1" height="1" fill="#444"/><rect x="5" y="9" width="1" height="1" fill="#444"/><rect x="5" y="17" width="1" height="1" fill="#444"/><rect x="7" y="3" width="1" height="1" fill="#444"/><rect x="7" y="9" width="1" height="1" fill="#444"/><rect x="7" y="17" width="1" height="1" fill="#444"/><rect x="9" y="3" width="1" height="1" fill="#444"/><rect x="9" y="5" width="1" height="1" fill="#444"/><rect x="9" y="7" width="1" height="1" fill="#444"/><rect x="9" y="9" width="1" height="1" fill="#444"/><rect x="9" y="11" width="1" height="1" fill="#444"/><rect x="9" y="13" width="1" height="1" fill="#444"/><rect x="9" y="15" width="1" height="1" fill="#444"/><rect x="9" y="17" width="1" height="1" fill="#444"/><rect x="11" y="3" width="1" height="1" fill="#444"/><rect x="11" y="9" width="1" height="1" fill="#444"/><rect x="11" y="17" width="1" height="1" fill="#444"/><rect x="13" y="3" width="1" height="1" fill="#444"/><rect x="13" y="9" width="1" height="1" fill="#444"/><rect x="13" y="17" width="1" height="1" fill="#444"/><rect x="15" y="3" width="1" height="1" fill="#444"/><rect x="15" y="9" width="1" height="1" fill="#444"/><rect x="15" y="17" width="1" height="1" fill="#444"/><rect x="17" y="3" width="1" height="1" fill="#444"/><rect x="17" y="5" width="1" height="1" fill="#444"/><rect x="17" y="7" width="1" height="1" fill="#444"/><rect x="17" y="9" width="1" height="1" fill="#444"/><rect x="17" y="11" width="1" height="1" fill="#444"/><rect x="17" y="13" width="1" height="1" fill="#444"/><rect x="17" y="15" width="1" height="1" fill="#444"/><rect x="17" y="17" width="1" height="1" fill="#444"/></svg></div>
<div class="btn" style="left:257px;top:245px;"><svg viewBox="0 0 20 20"><text x="10" y="16" font-family="Liberation Sans" font-size="15" font-weight="bold" font-style="normal" fill="#1a1a1a" text-anchor="middle" >&#182;</text></svg></div>
<div class="btn" style="left:280px;top:245px;"><svg viewBox="0 0 20 20"><path d="M4.5 2.5 H12 L15 5.5 V17.5 H4.5Z" fill="#f4f8fa" stroke="#777" stroke-width=".8"/><text x="8.5" y="13" font-family="Liberation Sans" font-size="7" font-weight="normal" font-style="normal" fill="#3aa0a0" text-anchor="middle" >P</text><circle cx="13" cy="12.5" r="3" fill="#dfe8f0" stroke="#8899aa"/><path d="M11 14.5 L8.5 17.5" stroke="#555" stroke-width="1.2"/></svg></div>
<div class="btn" style="left:303px;top:245px;"><svg viewBox="0 0 20 20"><rect x="4" y="4" width="12" height="12" rx="1" fill="#ddd" stroke="#888"/><rect x="5.5" y="5.5" width="9" height="9" fill="#f8f8f8"/><path d="M7 8 V11 H13 V8" stroke="#333" stroke-width="1.2" fill="none"/></svg></div>
<div class="btn" style="left:326px;top:245px;"><svg viewBox="0 0 20 20"><text x="6.5" y="11.5" font-family="Liberation Sans" font-size="11" font-weight="bold" font-style="normal" fill="#a020b0" text-anchor="middle" >A</text><text x="12" y="18" font-family="Liberation Serif" font-size="14" font-weight="bold" font-style="normal" fill="#1a6ad8" text-anchor="middle" >A</text></svg></div>
<div class="btn" style="left:349px;top:245px;"><svg viewBox="0 0 20 20"><g fill="#b8b8b8"><circle cx="4" cy="11.5" r="1.6"/><circle cx="7.5" cy="11.5" r="1.6"/><circle cx="12.5" cy="9.5" r="1.6"/><circle cx="16" cy="9.5" r="1.6"/></g><path d="M2.6 11 Q3 8 5 7.5 M6.1 11 Q6.5 8 8.5 7.5 M13.9 10 Q13.5 13 11.5 13.5 M17.4 10 Q17 13 15 13.5" stroke="#b8b8b8" stroke-width="1.2" fill="none"/></svg></div>
<div class="btn" style="left:372px;top:245px;"><svg viewBox="0 0 20 20"><text x="10" y="13" font-family="Liberation Mono" font-size="6.5" font-weight="normal" font-style="normal" fill="#b0b0b0" text-anchor="middle" >ABBR</text></svg></div>
<div class="btn" style="left:395px;top:245px;"><svg viewBox="0 0 20 20"><text x="10" y="13" font-family="Liberation Mono" font-size="5.5" font-weight="normal" font-style="normal" fill="#b0b0b0" text-anchor="middle" >A.B.C.</text></svg></div>
<div class="btn" style="left:418px;top:245px;"><svg viewBox="0 0 20 20"><text x="10" y="15" font-family="Liberation Serif" font-size="11" font-weight="normal" font-style="normal" fill="#bbb" text-anchor="middle" >A</text><rect x="4" y="10" width="12" height=".8" fill="#e89090"/></svg></div>
<div class="btn" style="left:441px;top:245px;"><svg viewBox="0 0 20 20"><text x="10" y="14.5" font-family="Liberation Serif" font-size="11" font-weight="normal" font-style="normal" fill="#bbb" text-anchor="middle" >A</text><rect x="4" y="16" width="12" height=".8" fill="#9090e8"/></svg></div>
<div class="btn" style="left:464px;top:245px;"><svg viewBox="0 0 20 20"><rect x="3.5" y="6.5" width="12" height="11" rx="1" fill="#f4f8fa" stroke="#3a7ad8" stroke-width="1"/><rect x="4" y="7" width="11" height="2" fill="#7ab0e8"/><circle cx="6" cy="11" r=".8" fill="#2a2"/><circle cx="6" cy="13" r=".8" fill="#c22"/><circle cx="6" cy="15" r=".8" fill="#22c"/><path d="M7.5 11 H13 M7.5 13 H13 M7.5 15 H13" stroke="#889" stroke-width=".6"/><path d="M7 6 L11 2 Q14 1 17 3 L14 8 L10 9Z" fill="#e8b048" stroke="#a07020" stroke-width=".5"/></svg></div>
<div class="btn" style="left:487px;top:245px;"><svg viewBox="0 0 20 20"><circle cx="10" cy="4.5" r="1.8" fill="none" stroke="#666" stroke-width="1.2"/><path d="M10 6.3 V16 M7 9 H13 M3 11 Q4 16 10 16.5 Q16 16 17 11" stroke="#666" stroke-width="1.6" fill="none"/><path d="M2 10 L5 10 L3.5 13Z M18 10 L15 10 L16.5 13Z" fill="#666"/></svg></div>
<div class="btn" style="left:510px;top:245px;"><svg viewBox="0 0 20 20"><g opacity=".3"><rect x="4" y="8" width="5" height="5" rx="2" fill="none" stroke="#777" stroke-width="1.5"/><rect x="11" y="8" width="5" height="5" rx="2" fill="none" stroke="#777" stroke-width="1.5"/><path d="M6 3 L8 6 M14 3 L12 6 M6 17 L8 14 M14 17 L12 14" stroke="#777" stroke-width=".8"/></g></svg></div>
<div class="btn" style="left:533px;top:245px;"><svg viewBox="0 0 20 20"><rect x="2.5" y="7.5" width="8" height="5" rx="2.5" fill="none" stroke="#666" stroke-width="1.6"/><rect x="9.5" y="7.5" width="8" height="5" rx="2.5" fill="none" stroke="#666" stroke-width="1.6"/><path d="M6 10 H14" stroke="#666" stroke-width="1.2"/></svg></div>
<div class="btn" style="left:556px;top:245px;"><svg viewBox="0 0 20 20"><rect x="2.5" y="5" width="15" height="10" fill="#e8f0f8" stroke="#666" stroke-width=".8"/><rect x="3.5" y="6" width="13" height="8" fill="#4a90d8"/><path d="M3.5 11 Q8 7 16.5 12 V14 H3.5Z" fill="#2a6a50"/><rect x="3.5" y="6" width="13" height="2" fill="#a8d0f0"/></svg></div>
<div class="btn" style="left:579px;top:245px;"><svg viewBox="0 0 20 20"><text x="8.5" y="8" font-family="Liberation Sans" font-size="7" font-weight="bold" font-style="normal" fill="#222" text-anchor="middle" >abc</text><path d="M3 10 H14" stroke="#222" stroke-width="1" stroke-dasharray="1 1"/><path d="M8.5 13.5 L11 16.5 L17 10" stroke="#2ab82a" stroke-width="2.6" fill="none"/></svg></div>
<div class="btn" style="left:602px;top:245px;"><svg viewBox="0 0 20 20"><rect x="3.5" y="5.5" width="13" height="10" fill="#f8f8f8" stroke="#777" stroke-width="1"/><rect x="4" y="6" width="12" height="1.5" fill="#999"/><rect x="4" y="11" width="12" height="4" fill="#d8e8f4"/><path d="M4 10.5 H16" stroke="#888" stroke-width=".8"/></svg></div>
<div class="btn" style="left:625px;top:245px;"><svg viewBox="0 0 20 20"><rect x="3.5" y="5.5" width="13" height="10" fill="#f4f4f4" stroke="#777" stroke-width="1"/><rect x="4" y="6" width="12" height="1.5" fill="#999"/><rect x="11" y="7.5" width="5" height="7.5" fill="#c8d8f0"/><path d="M11.5 9 H15.5 M11.5 11 H15.5 M11.5 13 H15.5" stroke="#3a5ad8" stroke-width=".6"/></svg></div>
<div class="ab" style="left:230px;top:270px;width:633px;height:343px;overflow:hidden">
<div class="ab" style="left:-230px;top:-270px;width:1140px;height:765px">
<div class="ab" style="left:245px;top:325px;width:601px;height:300px;background:#ececec"></div>
<div class="ab" style="left:245px;top:285px;width:601px;height:39px;background:linear-gradient(180deg,#a0a0a0 0%,#939393 30%,#7c7c7c 70%,#6b6b6b 100%)"></div>
<div class="ab" style="left:245px;top:285px;width:601px;height:39px;overflow:hidden"><div class="ab" style="left:-200px;top:-121px;width:1000px;height:140px;border-radius:50%;background:rgba(255,255,255,.09)"></div></div>
<div class="ab" style="left:243px;top:283px;width:604px;height:1px;background:repeating-linear-gradient(90deg,#a6a6a6 0 3px,transparent 3px 5px)"></div>
<div class="ab" style="left:243px;top:283px;width:1px;height:330px;background:repeating-linear-gradient(180deg,#a6a6a6 0 3px,transparent 3px 5px)"></div>
<div class="ab" style="left:845px;top:283px;width:1px;height:330px;background:repeating-linear-gradient(180deg,#a6a6a6 0 3px,transparent 3px 5px)"></div>
<div class="ab" style="left:244px;top:325px;width:602px;height:1px;background:repeating-linear-gradient(90deg,#a6a6a6 0 3px,transparent 3px 5px)"></div>
<div class="ab" style="left:244px;top:327px;width:602px;height:1px;background:repeating-linear-gradient(90deg,#a6a6a6 0 3px,transparent 3px 5px)"></div>
<div class="ab" style="left:248px;top:329px;width:596px;height:1px;background:repeating-linear-gradient(90deg,#a6a6a6 0 3px,transparent 3px 5px)"></div>
<div class="ab" style="left:246px;top:327px;width:1px;height:286px;background:repeating-linear-gradient(180deg,#a6a6a6 0 3px,transparent 3px 5px)"></div>
<div class="ab" style="left:248px;top:329px;width:1px;height:284px;background:repeating-linear-gradient(180deg,#a6a6a6 0 3px,transparent 3px 5px)"></div>
<div class="ab" style="left:263px;top:329px;width:1px;height:284px;background:repeating-linear-gradient(180deg,#a6a6a6 0 3px,transparent 3px 5px)"></div>
<div class="ab" style="left:265px;top:329px;width:1px;height:124px;background:repeating-linear-gradient(180deg,#a6a6a6 0 3px,transparent 3px 5px)"></div>
<div class="ab" style="left:826px;top:329px;width:1px;height:124px;background:repeating-linear-gradient(180deg,#a6a6a6 0 3px,transparent 3px 5px)"></div>
<div class="ab" style="left:828px;top:327px;width:1px;height:286px;background:repeating-linear-gradient(180deg,#a6a6a6 0 3px,transparent 3px 5px)"></div>
<div class="ab" style="left:843px;top:329px;width:1px;height:284px;background:repeating-linear-gradient(180deg,#a6a6a6 0 3px,transparent 3px 5px)"></div>
<div class="ab" style="left:248px;top:452px;width:596px;height:1px;background:repeating-linear-gradient(90deg,#a6a6a6 0 3px,transparent 3px 5px)"></div>
<div class="ab" style="left:579px;top:358px;width:247px;height:1px;background:#d8d8d8"></div>
<div class="ab" style="left:265px;top:358px;width:314px;height:1px;background:#e2e2e2"></div>
<svg class="ab" style="left:260px;top:330px" width="325" height="66" viewBox="260 330 325 66"><path d="M302,374.7 L330,370.5 L360,368.4 L422,367.7 L470,370.5 L500,373.3 L530,374 L555,374 L576,372 L555,376.8 L530,379 L500,381 L460,379.5 L422,378 L390,375.5 L360,373.3 L330,373.8Z" fill="#d8d0c8" stroke="#d8d0c8" stroke-width=".6" stroke-linejoin="round"/><path d="M262,385.2 L300,381 L340,379 L360,378.2 L422,379.5 L470,381 L500,382.5 L545,381 L500,386.7 L460,387.2 L422,387.3 L390,385 L360,382.5 L320,384 L262,385.8Z" fill="#d8d0c8" stroke="#d8d0c8" stroke-width=".6" stroke-linejoin="round"/><path d="M268,365.4 C274,364.5 279,368 284,371.5 C290,375.5 297,377 301,374 C303.5,372 303,369.5 301.5,368.8" fill="none" stroke="#544c4c" stroke-width="1.95" stroke-linecap="round"/><path d="M273,372.5 C279,362 286,346 292,339.5 C295,336.5 298.5,338 297.5,342 C296,348 288,357 280,363" fill="none" stroke="#544c4c" stroke-width="1.95" stroke-linecap="round"/><path d="M300.5,347.5 L299,351.5" fill="none" stroke="#544c4c" stroke-width="2.60" stroke-linecap="round"/><path d="M298,354 C296,358 293,363 293.5,366 C294,368.5 298,367 301,364" fill="none" stroke="#544c4c" stroke-width="2.08" stroke-linecap="round"/><path d="M314.5,346 C311,353 307,361 306,365 C305.5,368 309,368 312.5,364.5" fill="none" stroke="#544c4c" stroke-width="2.34" stroke-linecap="round"/><path d="M325.5,346 C322,353 318,361 317,365 C316.5,368 320,368 323.5,364.5" fill="none" stroke="#544c4c" stroke-width="2.34" stroke-linecap="round"/><path d="M308,353.6 C314,353 321,353 327.5,353.2" fill="none" stroke="#544c4c" stroke-width="1.43" stroke-linecap="round"/><path d="M323.5,364.5 C330,358 338,344 343,339 C346,336.5 347,341 344.5,345 C340,352 333,360 330,365 C329.5,368 334,367.5 337,364.5" fill="none" stroke="#544c4c" stroke-width="1.95" stroke-linecap="round"/><path d="M337,362 C342,360 348,357 348,354 C348,351.5 344,352 341.5,356 C338,361 338,366.5 342,367 C346,367.5 350,363 353,360" fill="none" stroke="#544c4c" stroke-width="1.95" stroke-linecap="round"/><path d="M365.5,352 C362,350 361,345 365,342 C370,338.5 385,339.5 397,340 C395,342 394,344 393.5,347" fill="none" stroke="#544c4c" stroke-width="2.08" stroke-linecap="round"/><path d="M383,344 C378,352 373,360 369.5,367" fill="none" stroke="#544c4c" stroke-width="2.86" stroke-linecap="round"/><path d="M379.5,360 C382,356 386,352 388,350 C388,356 385,362 386,366 C388,364 390,360 392.5,358 C394,359 395,360 397,360" fill="none" stroke="#544c4c" stroke-width="1.95" stroke-linecap="round"/><path d="M396,362 C401,360 406,357 406,354 C406,351.5 402,352 399.5,356 C396,361 396,366.5 400,367 C404,367.5 408,363 411,360" fill="none" stroke="#544c4c" stroke-width="1.95" stroke-linecap="round"/><path d="M421,353.5 C416,351 410,357 410.5,363 C411,367.5 416,366 419,361 C421,357 423,354 424,352.5 C422,357 420,363 421.5,366 C423,367 426,365 428,362" fill="none" stroke="#544c4c" stroke-width="2.08" stroke-linecap="round"/><path d="M428,362 C432,358 437,352 443,350 C440,353 437,356 440,360 C443,364 439,369 433,368 C431,367.5 430.5,366 432,365" fill="none" stroke="#544c4c" stroke-width="2.08" stroke-linecap="round"/><path d="M444,358 C446,355 448,353 449,353 C447,358 444,364 446,366.5 C449,368 455,360 461.5,353 C459,358 456,364 458,366.5 C460,367 462,365 464,362" fill="none" stroke="#544c4c" stroke-width="2.08" stroke-linecap="round"/><path d="M464,362 C467,358 471,352 474,349.5 C473,355 471,362 471.5,367 C473,363 475,359 477.5,357 C479,357.5 480,358 482,357.5" fill="none" stroke="#544c4c" stroke-width="2.08" stroke-linecap="round"/><path d="M481,362 C486,360 491,357 491,354 C491,351.5 487,352 484.5,356 C481,361 481,366.5 485,367 C489,367.5 493,363 496,360" fill="none" stroke="#544c4c" stroke-width="1.95" stroke-linecap="round"/><path d="M508,350 C505,346 510,341 520,340.5 C530,340 539,340 540,344 C541,349 534,354 527,355.5" fill="none" stroke="#544c4c" stroke-width="2.08" stroke-linecap="round"/><path d="M529,345 C524,352 519,360 516,366" fill="none" stroke="#544c4c" stroke-width="2.60" stroke-linecap="round"/><path d="M527,355.5 C535,356 537,361 534,366 C531,370 523,371.5 518,369 C515,367.5 514,365 516,364.5" fill="none" stroke="#544c4c" stroke-width="2.08" stroke-linecap="round"/><path d="M553,353 C548,352 543,358 544,363 C545,368 551,367 554,362 C557,357 556,352 552,353 C553,356 556,356 558,355" fill="none" stroke="#544c4c" stroke-width="1.95" stroke-linecap="round"/><path d="M557,356 C561,354 563,358 565,362 C567,366 570,367 574,365" fill="none" stroke="#544c4c" stroke-width="1.95" stroke-linecap="round"/><path d="M576,352 C570,358 562,366 553,375" fill="none" stroke="#544c4c" stroke-width="1.69" stroke-linecap="round"/></svg>
<div class="ab" style="left:581px;top:322.5px;font-family:'Liberation Serif',serif;font-size:29.7px;color:#6b6464;white-space:nowrap;transform:scaleX(1.015);transform-origin:left">Tax Invoice</div>
<div class="ab" style="left:581px;top:379.6px;font-size:12px;color:#555;white-space:nowrap">ABN: 73 793 015 350</div>
<div class="ab" style="left:266px;top:416px;font-family:'Liberation Serif',serif;font-weight:bold;font-size:25px;line-height:17.5px;color:#9b8d8d;white-space:nowrap;transform:scaleX(1.162);transform-origin:left">The status of your order No. <span style="color:#0000ee;text-decoration:underline">oooo<span style="position:relative;top:5px;font-size:20px;line-height:0">7</span></span> has been<br>changed to shipped.</div>
<div class="ab" style="left:265px;top:454px;width:562px;height:200px;background:#fff;border:1px solid #b4b4b4;border-bottom:0"></div>
<div class="ab" style="left:272px;top:453.2px;font-family:'Liberation Serif',serif;font-weight:bold;font-size:19px;color:#282828;white-space:nowrap;transform:scaleX(1.045);transform-origin:left">HI MOLLY MOPP,</div>
<div class="ab" style="left:272px;top:487px;font-size:12px;color:#222;white-space:nowrap">Thank you for your order at http://www.littletreasurebox.com.au/website/.</div>
<div class="ab" style="left:272px;top:515px;width:548px;height:1px;background:repeating-linear-gradient(90deg,#a6a6a6 0 3px,transparent 3px 5px)"></div>
<div class="ab" style="left:274px;top:517px;width:544px;height:1px;background:repeating-linear-gradient(90deg,#a6a6a6 0 3px,transparent 3px 5px)"></div>
<div class="ab" style="left:274px;top:536px;width:544px;height:1px;background:repeating-linear-gradient(90deg,#a6a6a6 0 3px,transparent 3px 5px)"></div>
<div class="ab" style="left:274px;top:538px;width:544px;height:1px;background:repeating-linear-gradient(90deg,#a6a6a6 0 3px,transparent 3px 5px)"></div>
<div class="ab" style="left:272px;top:515px;width:1px;height:98px;background:repeating-linear-gradient(180deg,#a6a6a6 0 3px,transparent 3px 5px)"></div>
<div class="ab" style="left:274px;top:517px;width:1px;height:96px;background:repeating-linear-gradient(180deg,#a6a6a6 0 3px,transparent 3px 5px)"></div>
<div class="ab" style="left:544px;top:517px;width:1px;height:96px;background:repeating-linear-gradient(180deg,#a6a6a6 0 3px,transparent 3px 5px)"></div>
<div class="ab" style="left:546px;top:517px;width:1px;height:96px;background:repeating-linear-gradient(180deg,#a6a6a6 0 3px,transparent 3px 5px)"></div>
<div class="ab" style="left:818px;top:517px;width:1px;height:96px;background:repeating-linear-gradient(180deg,#a6a6a6 0 3px,transparent 3px 5px)"></div>
<div class="ab" style="left:820px;top:515px;width:1px;height:98px;background:repeating-linear-gradient(180deg,#a6a6a6 0 3px,transparent 3px 5px)"></div>
<div class="ab" style="left:274px;top:518.8px;font-weight:bold;font-size:13px;color:#555;white-space:nowrap;letter-spacing:.3px">Billing address</div>
<div class="ab" style="left:548px;top:518.8px;font-weight:bold;font-size:13px;color:#2e8cb4;white-space:nowrap;letter-spacing:.3px">Shipping address</div>
<div class="ab" style="left:274px;top:541.8px;font-size:11px;color:#1a1a1a;white-space:nowrap;letter-spacing:.72px;word-spacing:1px">Mrs Mary Mopp</div>
<div class="ab" style="left:274px;top:559.8px;font-size:11px;color:#1a1a1a;white-space:nowrap;letter-spacing:.72px;word-spacing:1px">My Street</div>
<div class="ab" style="left:274px;top:577.8px;font-size:11px;color:#1a1a1a;white-space:nowrap;letter-spacing:.72px;word-spacing:1px">5634 My city Australian Capital Territory</div>
<div class="ab" style="left:274px;top:595.8px;font-size:11px;color:#1a1a1a;white-space:nowrap;letter-spacing:.72px;word-spacing:1px">Australia</div>
<div class="ab" style="left:548px;top:541.8px;font-size:11px;color:#1a1a1a;white-space:nowrap;letter-spacing:.72px;word-spacing:1px">Mrs Mary Mopp</div>
<div class="ab" style="left:548px;top:559.8px;font-size:11px;color:#1a1a1a;white-space:nowrap;letter-spacing:.72px;word-spacing:1px">My Street</div>
<div class="ab" style="left:548px;top:577.8px;font-size:11px;color:#1a1a1a;white-space:nowrap;letter-spacing:.72px;word-spacing:1px">5634 My city Australian Capital Territory</div>
<div class="ab" style="left:548px;top:595.8px;font-size:11px;color:#1a1a1a;white-space:nowrap;letter-spacing:.72px;word-spacing:1px">Australia</div>
<div class="ab" style="left:238px;top:278px;width:7px;height:7px;border:1px solid #000;background:#fff"></div>
<div class="ab" style="left:538px;top:278px;width:7px;height:7px;border:1px solid #000;background:#fff"></div>
<div class="ab" style="left:838px;top:278px;width:7px;height:7px;border:1px solid #000;background:#fff"></div>
<div class="ab" style="left:238px;top:569px;width:7px;height:7px;border:1px solid #000;background:#fff"></div>
<div class="ab" style="left:838px;top:569px;width:7px;height:7px;border:1px solid #000;background:#fff"></div>
</div>
<div class="ab" style="left:617px;top:0;width:16px;height:343px;background:#f1f1f1"></div>
<div class="ab" style="left:618px;top:17px;width:13px;height:154px;background:#bdbdbd"></div>
<div class="ab" style="left:620px;top:6px;border-left:4px solid transparent;border-right:4px solid transparent;border-bottom:5px solid #a3a3a3"></div>
</div>
</body></html>
